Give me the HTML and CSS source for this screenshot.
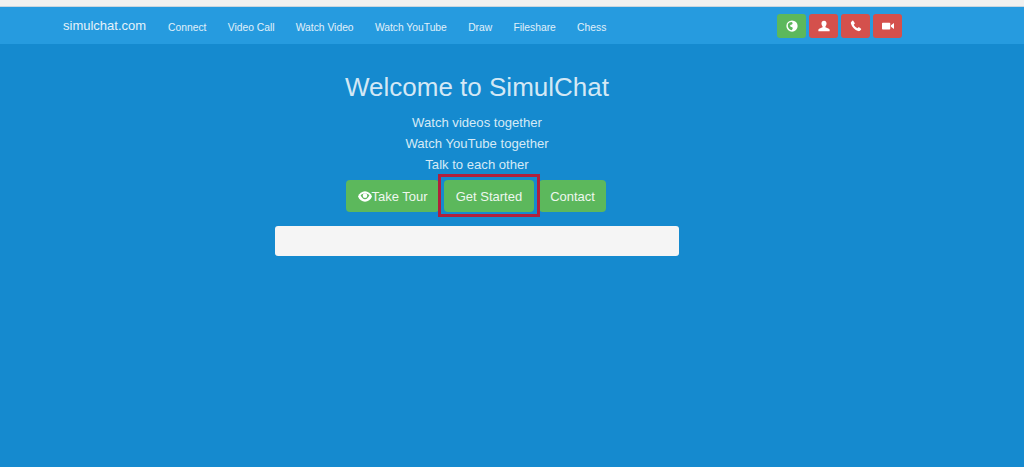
FILE: index.html
```html
<!DOCTYPE html>
<html lang="en">
<head>
  <meta charset="UTF-8" />
  <meta name="viewport" content="width=device-width, initial-scale=1.0" />
  <title>SimulChat</title>
  <link rel="stylesheet" href="styles.css">
</head>
<body>
  <div class="topstrip"></div>
  <nav class="navbar">
    <a class="brand" href="#">simulchat.com</a>
    <ul class="navlinks">
      <li><a href="#">Connect</a></li>
      <li><a href="#">Video Call</a></li>
      <li><a href="#">Watch Video</a></li>
      <li><a href="#">Watch YouTube</a></li>
      <li><a href="#">Draw</a></li>
      <li><a href="#">Fileshare</a></li>
      <li><a href="#">Chess</a></li>
    </ul>
    <div class="navbtns">
      <button class="iconbtn green">
        <svg viewBox="0 0 16 16" width="12" height="12"><circle cx="8" cy="8" r="7.500" fill="#fff"/><path d="M2.500 5.500C3.500 3.500 5.500 2.500 7.500 2.500l1.500 1.500-1 2-2.500.5.500 2.500 2.500.5.500 2-1.500 2C5 13 3 11 2.500 8.500z" fill="#5cb85c"/></svg>
      </button>
      <button class="iconbtn red">
        <svg viewBox="0 0 16 16" width="12" height="12"><path d="M8 1c2.200 0 3.400 1.600 3.400 3.800 0 1.500-.6 2.900-1.500 3.700v1.200l4.600 1.900c.6.3 1 .8 1 1.400V15H.5v-2c0-.6.4-1.100 1-1.400l4.600-1.900V8.500c-.9-.8-1.500-2.200-1.500-3.700C4.600 2.600 5.800 1 8 1z" fill="#fff"/></svg>
      </button>
      <button class="iconbtn red">
        <svg viewBox="0 0 16 16" width="12" height="12"><path d="M3.200 1L1.500 2.500C1 3 1 4 1.300 5c1.500 4.500 5 8.300 9.500 9.700 1 .3 1.900.1 2.500-.5l1.400-1.500c.3-.3.3-.7 0-1l-2.600-2c-.3-.2-.7-.2-1 .1l-1.200 1.200C7.900 10.300 5.800 8 5 6.400l1.200-1.300c.3-.3.3-.7.1-1L4.300 1.100c-.3-.4-.8-.4-1.100-.1z" fill="#fff"/></svg>
      </button>
      <button class="iconbtn red">
        <svg viewBox="0 0 16 16" width="12" height="12"><path d="M1 3.500h9c.6 0 1 .4 1 1v7c0 .6-.4 1-1 1H1c-.6 0-1-.4-1-1v-7c0-.6.4-1 1-1zM12 7l4-3v8l-4-3z" fill="#fff"/></svg>
      </button>
    </div>
  </nav>

  <main class="hero">
    <h1>Welcome to SimulChat</h1>
    <p>Watch videos together</p>
    <p>Watch YouTube together</p>
    <p>Talk to each other</p>
    <div class="actions">
      <button class="btn">
        <svg viewBox="0 0 16 12" width="14" height="11"><path d="M8 0c3.500 0 6.500 2.400 8 6-1.500 3.600-4.500 6-8 6S1.500 9.600 0 6c1.500-3.600 4.500-6 8-6z" fill="#fff"/><path d="M3 4.500c1.200-1.300 3-2 5-2s3.800.7 5 2c-1 2.500-2.800 4.500-5 4.500S4 7 3 4.500z" fill="#5cb85c"/><circle cx="8" cy="5" r="2.600" fill="#fff"/></svg>Take Tour
      </button>
      <button class="btn marked">Get Started</button>
      <button class="btn">Contact</button>
    </div>
    <div class="well"></div>
  </main>
</body>
</html>
```

FILE: styles.css
```css
html, body {
  height: 100%;
}
body {
  margin: 0;
  font-family: "Liberation Sans", Arial, sans-serif;
  background: #158acf;
  color: #d6eaf6;
  overflow: hidden;
}
.topstrip {
  height: 7px;
  background: #f1f1f0;
  border-bottom: 1px solid #c9d6df;
  box-sizing: border-box;
}
.navbar {
  display: flex;
  align-items: center;
  height: 37px;
  padding-left: 63px;
  background: #269bdf;
}
.brand {
  color: #e4f2fa;
  font-size: 13px;
  text-decoration: none;
  margin-right: 22px;
}
.navlinks {
  display: flex;
  gap: 21.300px;
  list-style: none;
  margin: 0;
  padding: 0;
}
.navlinks a {
  color: #e0f0fa;
  font-size: 10.300px;
  text-decoration: none;
}
.navbtns {
  display: flex;
  gap: 3px;
  margin-left: 171px;
}
.iconbtn {
  display: flex;
  align-items: center;
  justify-content: center;
  width: 29px;
  height: 24px;
  padding: 0;
  border: 0;
  border-radius: 3px;
}
.green {
  background: #5cb85c;
}
.red {
  background: #d4504c;
}
.hero {
  display: flex;
  flex-direction: column;
  align-items: center;
  width: 404px;
  margin-left: 275px;
}
.hero h1 {
  margin: 27px 0 9px;
  font-size: 26px;
  font-weight: normal;
  line-height: 32px;
  color: #d3e8f5;
  white-space: nowrap;
}
.hero p {
  margin: 0;
  font-size: 13.100px;
  line-height: 21px;
}
.actions {
  display: flex;
  gap: 5px;
  margin: 5px 0 14px 71px;
  align-self: flex-start;
}
.btn {
  display: flex;
  align-items: center;
  justify-content: center;
  height: 32px;
  padding: 0 11.500px;
  border: 0;
  border-radius: 4px;
  background: #5cb85c;
  color: #eef7ee;
  font-family: inherit;
  font-size: 13px;
}
.marked {
  position: relative;
}
.marked::after {
  content: "";
  position: absolute;
  top: -6px;
  right: -6px;
  bottom: -5px;
  left: -6px;
  border: 3.500px solid #b0203c;
}
.well {
  width: 100%;
  height: 30px;
  background: #f5f5f5;
  border-radius: 3px;
}
```
